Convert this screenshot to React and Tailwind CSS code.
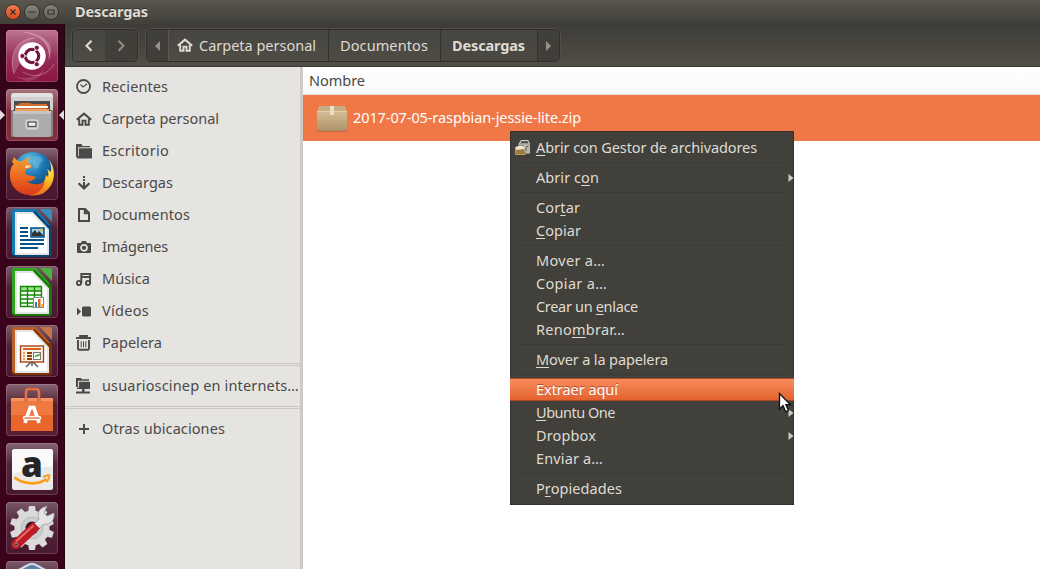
import React, { useLayoutEffect, useRef } from "react";

/* Label that tracks its letters so the run is `w` pixels wide. */
function Label({ w, children, className = "" }) {
  const ref = useRef(null);
  useLayoutEffect(() => {
    const el = ref.current;
    el.style.letterSpacing = "0px";
    const natural = el.getBoundingClientRect().width;
    el.style.letterSpacing = (w - natural) / el.textContent.length + "px";
  }, [w]);
  return (
    <span ref={ref} className={"inline-block shrink-0 whitespace-nowrap pb-0.5 " + className}>
      {children}
    </span>
  );
}

const homeShape = (
  <g fill="none" stroke="currentColor">
    <path d="M.8 8.7 8 2.6l7.2 6.1" strokeWidth="2.1" />
    <path d="M3.2 8v5.8h3.3V9.6h3v4.2h3.3V8" strokeWidth="1.9" />
  </g>
);

const sideIcons = {
  home: homeShape,
  recent: (
    <g fill="none" stroke="currentColor">
      <circle cx="7.5" cy="7.5" r="6.5" strokeWidth="1.8" />
      <path d="M4.5 5.5 7 8l4.2-3.2" strokeWidth="1.1" />
    </g>
  ),
  folder: (
    <g fill="currentColor">
      <path d="M0 1h5.5l1 2H14v1.2H2.2V14H0z" />
      <path d="M3 5.3h13V15.5H.8V13H3z" />
    </g>
  ),
  down: (
    <g>
      <path d="M7 1h2v2H7zM7 4h2v2H7zM7 7h2v5H7z" fill="currentColor" />
      <path d="M2.6 8.2 8 13.4l5.4-5.2" fill="none" stroke="currentColor" strokeWidth="2.2" />
    </g>
  ),
  doc: <path d="M3 2h6.2L13 5.8V14H3z M8.8 2v4.2H13" fill="none" stroke="currentColor" strokeWidth="2" />,
  camera: (
    <g>
      <path d="M2 4h3l1-2h4l1 2h3q1 0 1 1v8q0 1-1 1H2q-1 0-1-1V5q0-1 1-1z" fill="currentColor" />
      <circle cx="8" cy="8.8" r="3" fill="#4a4949" stroke="#e6e4e1" strokeWidth="1.7" />
    </g>
  ),
  music: (
    <g fill="none" stroke="currentColor" strokeWidth="1.9">
      <circle cx="3" cy="12" r="2.1" />
      <circle cx="12" cy="12" r="2.1" />
      <path d="M5.3 12V3h8.8v9M5.3 6h8.8" />
    </g>
  ),
  video: <path d="M6 4.500 7 3.500h7l1 1v8l-1 1H7l-1-1zM1 4.500l4 4-4 4z" fill="currentColor" />,
  trash: (
    <g fill="none" stroke="currentColor">
      <path d="M0 3h15M4 2.3V1h7v1.3" strokeWidth="1.8" />
      <path d="M2 5v8.5q0 1.3 1.3 1.3h8.4q1.3 0 1.3-1.3V5" strokeWidth="1.9" />
      <path d="M5.2 6.3v6M7.5 6.3v6M9.8 6.3v6" strokeWidth="1" />
    </g>
  ),
  remote: (
    <g fill="currentColor">
      <path d="M0 0h5l1 1.300h7v1.500H2V9H0z" />
      <path d="M3 3.800h11V11H1V9.500h2zM6 11h2.500v2.600H6zM0 13.600h14V15.500H0z" />
    </g>
  ),
  plus: <path d="M3 8h10M8 3v10" stroke="currentColor" strokeWidth="1.9" />,
};

const SideRow = ({ icon, w, children }) => (
  <li className="flex h-8 items-center gap-2.5 pl-[11px]">
    <svg className="shrink-0" width="16" height="16" viewBox="0 0 16 16">{sideIcons[icon]}</svg>
    <Label w={w}>{children}</Label>
  </li>
);

const SideSeparator = () => <div className="my-1 h-[3px] border-y border-[#cbc8c5]" />;

function OfficeDoc({ color, dark, children }) {
  return (
    <g>
      <path d="M8 2h22l16 18v27q0 3-3 3H9q-3 0-3-3V4q0-2 2-2z" fill={dark} />
      <path d="M7 2h23l14 16-2 0V48H9q-3 0-3-3V4z" fill={color} />
      <path d="M9 5h18l16 17v26H9z" fill="#e4e4e4" />
      <path d="M11 7h15l15 16v23H11z" fill="#fff" />
      <path d="m27 5 16 17v-3L29 4z" fill={dark} />
      <path d="M34 2h10q2 0 2 2v11z" fill={color} />
      <path d="M34 2h10q2 0 2 2v11z" fill="#fff" opacity=".14" />
      {children}
    </g>
  );
}

const GEAR = Array.from({ length: 10 }, (_, i) => i * 36);

const apps = [
  {
    id: "dash",
    tile: "bg-[linear-gradient(180deg,#bd7590,#96305a_50%,#8a1440)]",
    art: (
      <g>
        <path d="M18 2q27 5 25 27 5-12-3-19-8-7-22-8z" fill="#efc8d6" opacity=".4" />
        <path d="M8 44C3 26 9 9 29 8 15 14 10 22 14 33z" fill="#efc8d6" opacity=".25" />
        <path d="M4 45q20 8 34-5-6 12-18 11z" fill="#efc8d6" opacity=".2" />
        <g fill="none" stroke="#f0c6d5" strokeWidth=".8" opacity=".5">
          <path d="M8 44C3 26 9 9 29 8" />
          <path d="M18 2c18 3 27 14 25 27" />
          <path d="M48 34c-6 11-20 15-31 8" />
        </g>
        <circle cx="26" cy="26" r="13.7" fill="#fff" />
        <circle cx="26" cy="26" r="6.6" fill="none" stroke="#76143c" strokeWidth="3.4" />
        <g stroke="#fff" strokeWidth="1.2">
          <path d="M26 26 14 26M26 26l6-10.5M26 26l6 10.5" />
        </g>
        <circle cx="26" cy="26" r="5" fill="#fff" />
        <g fill="#76143c" stroke="#fff" strokeWidth=".8">
          <circle cx="16.4" cy="26" r="2.5" />
          <circle cx="30.8" cy="17.7" r="2.5" />
          <circle cx="30.8" cy="34.3" r="2.5" />
        </g>
      </g>
    ),
  },
  {
    id: "files",
    tile: "bg-[linear-gradient(180deg,#a77480,#7e2b3c_45%,#81303c)]",
    art: (
      <g>
        <path d="M7 4h38q2 0 2 3v14H5V7q0-3 2-3z" fill="#cfcfcf" />
        <path d="M7 4h38l2 4H5z" fill="#e2e2e2" />
        <path d="M8 12h36v12H8z" fill="#4d4a47" />
        <path d="M9 16h3l2-2h10l2 1h15v7H9z" fill="#d26f2f" />
        <path d="M10 17h32v2H10z" fill="#fff" />
        <path d="M9 20h34v3H9z" fill="#f0a060" />
        <path d="M7 22h38v24q0 2-2 2H9q-2 0-2-2z" fill="#acacac" />
        <path d="M7 22h38v3H7z" fill="#c5c5c5" />
        <path d="M5 21h2v27H6q-1 0-1-2zM45 21h2v25q0 2-2 2z" fill="#858585" />
        <rect x="20" y="31" width="12" height="9" rx="1.5" fill="#ccc" stroke="#e2e2e2" />
        <rect x="22" y="33" width="8" height="4.5" fill="#efefef" stroke="#555" strokeWidth="1.3" />
      </g>
    ),
  },
  {
    id: "browser",
    tile: "bg-[linear-gradient(180deg,#856574,#4e2337_38%,#4a1530)]",
    art: (
      <g>
        <defs>
          <radialGradient id="sky" cx=".4" cy=".2" r=".8"><stop offset="0" stopColor="#65c3e7" /><stop offset=".5" stopColor="#1b76b3" /><stop offset="1" stopColor="#123768" /></radialGradient>
          <linearGradient id="fox" x1="0" y1="0" x2="0" y2="1"><stop offset="0" stopColor="#f2a036" /><stop offset=".5" stopColor="#ed6b20" /><stop offset="1" stopColor="#d93a18" /></linearGradient>
          <linearGradient id="tail" x1="0" y1="0" x2="0" y2="1"><stop offset="0" stopColor="#fff4a0" /><stop offset=".5" stopColor="#fdc926" /><stop offset="1" stopColor="#ec6c1d" /></linearGradient>
        </defs>
        <circle cx="27" cy="24" r="20" fill="url(#sky)" />
        <path d="M28 8q8-1 9 5-5 2-4 7-7 2-6-5z" fill="#80bfda" opacity=".45" />
        <path d="M43 12c8 10 6 25-4 32-5 4-13 4-16 3 9-4 16-11 17-20l2 2q1-5-1-8l4 3q1-6-2-12z" fill="url(#tail)" />
        <path d="M6 14l2-5q3 5 8 4l8-4-2 5 4 4q-1 3-6 3-2 5 1 6l6 1 3 1q-3 5-9 4 4 4 12 3l6-2q-2 8-10 12c-13 4-25-6-25-18 0-6 1-10 4-12z" fill="url(#fox)" />
        <path d="M20 17l5 1-3 2h-3z" fill="#f7d9ae" />
      </g>
    ),
  },
  {
    id: "writer",
    tile: "bg-[linear-gradient(180deg,#7b5b6b,#4e2036_42%,#4b1731)]",
    art: (
      <OfficeDoc color="#147ab3" dark="#064371">
        <path d="M14 21h8M14 25h8M14 29h8M14 33h24M14 37h24M14 41h18" stroke="#06548a" strokeWidth="2" />
        <rect x="25" y="21" width="13" height="9" fill="#9ed1ed" stroke="#06548a" strokeWidth="1.6" />
        <path d="M26 29v-3l3-3 2 3 2-2 4 4v1z" fill="#323232" />
        <circle cx="35.5" cy="23" r="1.4" fill="#e6be2b" />
      </OfficeDoc>
    ),
  },
  {
    id: "calc",
    tile: "bg-[linear-gradient(180deg,#7b5b6b,#4e2036_42%,#4b1731)]",
    art: (
      <OfficeDoc color="#31a71f" dark="#167806">
        <rect x="14" y="21" width="22" height="20" fill="#fff" />
        <path d="M14 21h22v4H14z" fill="#9ce18b" />
        <path d="M14.5 20.5h21v20h-21zM14 25h22M14 29h22M14 33h22M14 37h22M21.5 21v20M28.5 21v20" fill="none" stroke="#168806" strokeWidth="1.4" />
        <rect x="27.5" y="31.5" width="10" height="10" fill="#fff" stroke="#888" />
        <path d="M29 36h2v5h-2z" fill="#1785be" /><path d="M32 33h2.5v8H32z" fill="#e66520" /><path d="M35 38h2v3h-2z" fill="#eebd24" />
      </OfficeDoc>
    ),
  },
  {
    id: "impress",
    tile: "bg-[linear-gradient(180deg,#7b5b6b,#4e2036_42%,#4b1731)]",
    art: (
      <OfficeDoc color="#bd612b" dark="#813303">
        <path d="m25 37-5 5M27 37l5 5M26 37v4" stroke="#666" strokeWidth="1.6" />
        <rect x="14.5" y="21" width="23" height="16" fill="#fff3e9" stroke="#a34311" strokeWidth="1.4" />
        <path d="M17 24h18" stroke="#d9641d" strokeWidth="2" />
        <path d="M17 28h2M17 31h2M17 34h2" stroke="#ed9c6c" strokeWidth="2" />
        <path d="M21 28h5M21 31h5M21 34h5" stroke="#963d08" strokeWidth="2" />
        <rect x="27.5" y="27.5" width="7" height="7" fill="#fff" stroke="#777" />
        <path d="m29 32 2-2 1 1 2-2" fill="none" stroke="#34a324" strokeWidth="1.2" />
      </OfficeDoc>
    ),
  },
  {
    id: "software",
    tile: "bg-[linear-gradient(180deg,#856574,#54202f_40%,#571f32)]",
    art: (
      <g>
        <path d="M5 14h42v33H5z" fill="#e9652c" />
        <path d="M5 14h42v17H5z" fill="#ef7a40" />
        <path d="M5 14h42v3H5z" fill="#f49365" />
        <path d="M20 18V8q0-3 3-3h7q3 0 3 3v10" fill="none" stroke="#c9562f" strokeWidth="3" />
        <path d="M20 18V8q0-3 3-3h7q3 0 3 3v10" fill="none" stroke="#ea8a60" strokeWidth="1.2" />
        <path d="M19 39 24.2 23.5h3.6L33 39" fill="none" stroke="#fff" strokeWidth="3.6" />
        <rect x="17.5" y="32.5" width="17" height="3" rx="1.5" fill="#ee7740" stroke="#fff" strokeWidth="1.5" />
      </g>
    ),
  },
  {
    id: "amazon",
    tile: "bg-[linear-gradient(180deg,#856574,#52253b_40%,#481a31)]",
    art: (
      <g>
        <rect x="6" y="6" width="41" height="41" rx="2.5" fill="#e9e9e9" />
        <path d="M6 9q0-3 3-3h35q3 0 3 3v14q-20 2-41 8z" fill="#fafafa" />
        <text x="26" y="33.5" textAnchor="middle" fontFamily="Open Sans, sans-serif" fontWeight="800" fontSize="35" fill="#252525">a</text>
        <path d="M8.5 34.5c10 7.5 24 7.5 32 1.5" fill="none" stroke="#fc9b10" strokeWidth="2.6" />
        <path d="M37 34q7-3 6.5-1-.5 4-3 6" fill="none" stroke="#fc9b10" strokeWidth="1.8" />
      </g>
    ),
  },
  {
    id: "settings",
    tile: "bg-[linear-gradient(180deg,#79596a,#52253b_40%,#481a31)]",
    art: (
      <g>
        <g fill="#dadada">
          {GEAR.map((a) => <path key={a} d="M22 11 23 4h6l1 7z" transform={`rotate(${a} 26 26)`} />)}
          <circle cx="26" cy="26" r="17.5" />
        </g>
        <circle cx="26" cy="26" r="11" fill="#cdcdcd" stroke="#bababa" />
        <circle cx="26" cy="26" r="6.5" fill="#38142a" />
        <path d="M27 23 33 17q-3-7 3-11l5-2-3 7 3 3 7-3q1 8-6 11l-5 .5L32 28z" fill="#e4e4e4" stroke="#999" strokeWidth=".8" />
        <path d="M6.5 39 27 20l7 6.5L14 45.5q-5 3-8.5-.5-1.5-3 1-6z" fill="#bd1c24" />
        <path d="m10 39.5 17.5-16" stroke="#e56b6b" strokeWidth="2" />
        <circle cx="10" cy="42.5" r="1.7" fill="#481a31" stroke="#ddd" strokeWidth=".6" />
      </g>
    ),
  },
  {
    id: "box",
    tile: "bg-[linear-gradient(180deg,#79596a,#52253b_40%,#481a31)]",
    art: <path d="M9 11 22 4q4-2 8 0l13 7v30H9z" fill="#5d80a8" stroke="#d3deea" strokeWidth="2" />,
  },
];

const menu = [
  [{ w: 221, archive: true, t: <><u>A</u>brir con Gestor de archivadores</> }],
  [{ w: 63, sub: true, t: <>Abrir c<u>o</u>n</> }],
  [{ w: 44, t: <>Cor<u>t</u>ar</> }, { w: 45, t: <><u>C</u>opiar</> }],
  [
    { w: 69, t: "Mover a…" },
    { w: 71, t: "Copiar a…" },
    { w: 102, t: <>Crear un <u>e</u>nlace</> },
    { w: 89, t: <>Reno<u>m</u>brar…</> },
  ],
  [{ w: 132, t: <><u>M</u>over a la papelera</> }],
  [
    { w: 82, active: true, t: "Extraer aquí" },
    { w: 79, sub: true, t: <><u>U</u>buntu One</> },
    { w: 60, sub: true, t: "Dropbox" },
    { w: 67, t: "Enviar a…" },
  ],
  [{ w: 86, t: <>P<u>r</u>opiedades</> }],
];

const ArchiveIcon = () => (
  <svg className="absolute left-[5px] top-[3px]" width="16" height="17" viewBox="0 0 16 17">
    <path d="m3 6 2-4h8l2 3v10H3z" fill="#888780" />
    <path d="M5 4 6 1.5h7L14.5 5H4z" fill="#55544d" stroke="#d8d8d2" />
    <path d="M9 6h6v8H9z" fill="#b9b9b2" />
    <path d="M13.5 7q-4 1-2 5" fill="none" stroke="#666" strokeWidth="1.2" />
    <path d="M0 8.5q4-3 9-1l1 7H1z" fill="#efe5c9" />
    <path d="m1 11 8-1 2 5.5H1z" fill="#9b7a46" />
    <path d="M.5 9v6.5h10" fill="none" stroke="#bd9a48" />
  </svg>
);

const MenuItem = ({ item }) => (
  <li
    className={
      "relative -mx-px flex h-[23px] items-center pl-[26px] " +
      (item.active
        ? "border-y border-[#b04a25] bg-linear-to-b from-[#f98b5c] to-[#e3622f] text-white [text-shadow:0_-1px_0_#b0502c]"
        : "text-[#dfdbd2]")
    }
  >
    {item.archive && <ArchiveIcon />}
    <Label w={item.w}>{item.t}</Label>
    {item.sub && (
      <svg className="ml-auto" width="6" height="8" viewBox="0 0 6 8">
        <path d="M.5 0 5.5 4 .5 8z" fill="#cdc9c0" />
      </svg>
    )}
  </li>
);

const ContextMenu = () => (
  <div className="absolute left-[510px] top-[131px] h-[374px] w-[284px] border border-[#34332f] bg-[#42403b] py-1 [&_u]:underline-offset-2 [&_u]:decoration-1">
    {menu.map((group, i) => (
      <React.Fragment key={i}>
        {i > 0 && <div className="mx-1 h-[7px] pt-[3px]"><div className="h-px bg-[#3c3a36]" /></div>}
        <ul>{group.map((item, j) => <MenuItem key={j} item={item} />)}</ul>
      </React.Fragment>
    ))}
  </div>
);

const WindowButton = ({ close, children }) => (
  <span
    className={
      "flex size-4 items-center justify-center rounded-full border border-[#35342f] " +
      (close ? "bg-linear-to-b from-[#f67b52] to-[#dc4717]" : "bg-linear-to-b from-[#858177] to-[#67645c]")
    }
  >
    <svg width="14" height="14" viewBox="0 0 14 14" fill="none" stroke="#36342f" strokeWidth="1.2">{children}</svg>
  </span>
);

export default function App() {
  return (
    <div className="relative flex h-[569px] w-[1040px] flex-col overflow-hidden bg-white font-['Noto_Sans','Open_Sans',sans-serif] text-[14.5px] leading-5 text-[#4a4949]">
      <header className="flex h-6 shrink-0 items-center bg-linear-to-b from-[#59574e] to-[#403f3a] pb-px pl-[5px] text-[#dfdbd2]">
        <div className="flex gap-[3px]">
          <WindowButton close><path d="m4.5 4.5 5 5m0-5-5 5" strokeWidth="1.4" /></WindowButton>
          <WindowButton><path d="M3.5 7h7" /></WindowButton>
          <WindowButton><path d="M4 5h6v4H4z" /></WindowButton>
        </div>
        <Label w={73} className="ml-[16px] font-bold [text-shadow:0_-1px_0_#33322e]">Descargas</Label>
      </header>

      <div className="flex min-h-0 flex-1">
        <nav className="relative flex w-[65px] shrink-0 flex-col gap-[7px] overflow-hidden border-r border-[#220512] bg-linear-to-b from-[#32051a] via-[#3a031b] to-[#3a031b]">
          {apps.map((app) => (
            <div key={app.id} className={"ml-[6px] size-[52px] shrink-0 rounded-[4px] shadow-[inset_0_0_0_1px_rgba(255,220,230,0.18)] first:mt-[6px] " + app.tile}>
              <svg className="overflow-visible" width="52" height="52" viewBox="0 0 52 52">{app.art}</svg>
            </div>
          ))}
          <svg className="absolute left-0 top-[86px]" width="65" height="10" viewBox="0 0 65 10">
            <path d="M0 0v10l5-5zM64 0v10l-5-5z" fill="#e0dcdd" />
          </svg>
        </nav>

        <div className="flex min-w-0 flex-1 flex-col">
          <div className="flex h-[43px] shrink-0 items-center gap-2 border-b border-[#383731] bg-linear-to-b from-[#3d3c37] to-[#504e46] pl-[7px] pt-px text-[#dfdbd2]">
            <div className="flex h-[33px] w-[66px] overflow-hidden rounded-[5px] border border-[#302f2b] shadow-[0_0_0_1px_#504e47]">
              <span className="flex w-[32px] items-center justify-center bg-linear-to-b from-[#464540] to-[#4e4c45]">
                <svg width="10" height="14" viewBox="0 0 10 14" fill="none" stroke="#dfdbd2" strokeWidth="2.1"><path d="m7.5 1.8-5 5 5 5" /></svg>
              </span>
              <span className="flex flex-1 items-center justify-center bg-[#403f3a]">
                <svg width="10" height="14" viewBox="0 0 10 14" fill="none" stroke="#8d8a82" strokeWidth="2.1"><path d="m2.5 1.8 5 5-5 5" /></svg>
              </span>
            </div>
            <div className="flex h-[33px] w-[414px] overflow-hidden rounded-[5px] border border-[#302f2b] bg-linear-to-b from-[#464540] to-[#4e4c45] shadow-[0_0_0_1px_#504e47]">
              <span className="flex w-[22px] items-center justify-center border-r border-[#5c5a52] bg-[#403f3a]">
                <svg width="5" height="10" viewBox="0 0 5 10"><path d="M5 0v10L0 5z" fill="#95928a" /></svg>
              </span>
              <span className="flex w-[160px] items-center gap-[6px] border-r border-[#33322e] pl-[8px]">
                <svg className="mb-0.5" width="16" height="16" viewBox="0 0 16 16">{homeShape}</svg>
                <Label w={117}>Carpeta personal</Label>
              </span>
              <span className="flex w-[112px] items-center border-r border-[#33322e] pl-[11px]"><Label w={88}>Documentos</Label></span>
              <span className="flex w-[97px] items-center border-r border-[#33322e] bg-[#484640]/60 pl-[11px] font-bold"><Label w={73}>Descargas</Label></span>
              <span className="flex flex-1 items-center justify-center bg-[#403f3a]">
                <svg width="5" height="10" viewBox="0 0 5 10"><path d="M0 0v10l5-5z" fill="#95928a" /></svg>
              </span>
            </div>
          </div>

          <div className="flex min-h-0 flex-1">
            <aside className="w-[238px] shrink-0 border-r-[3px] border-[#cfcac7] bg-[#e6e4e1] pt-1">
              <ul>
                <SideRow icon="recent" w={66}>Recientes</SideRow>
                <SideRow icon="home" w={117}>Carpeta personal</SideRow>
                <SideRow icon="folder" w={67}>Escritorio</SideRow>
                <SideRow icon="down" w={71}>Descargas</SideRow>
                <SideRow icon="doc" w={88}>Documentos</SideRow>
                <SideRow icon="camera" w={66}>Imágenes</SideRow>
                <SideRow icon="music" w={48}>Música</SideRow>
                <SideRow icon="video" w={47}>Vídeos</SideRow>
                <SideRow icon="trash" w={60}>Papelera</SideRow>
              </ul>
              <SideSeparator />
              <ul><SideRow icon="remote" w={197}>usuarioscinep en internets…</SideRow></ul>
              <SideSeparator />
              <ul><SideRow icon="plus" w={123}>Otras ubicaciones</SideRow></ul>
            </aside>

            <main className="flex min-w-0 flex-1 flex-col bg-white">
              <div className="flex h-7 items-center border-b border-[#e0dedc] bg-linear-to-b from-white to-[#f9f9f9] pl-[6px]">
                <Label w={56}>Nombre</Label>
              </div>
              <div className="flex h-[46px] items-center gap-[5px] bg-[#f07746] pl-[13px] text-white">
                <svg className="mt-0.5" width="32" height="32" viewBox="0 0 32 32">
                  <defs>
                    <linearGradient id="carton" x1="0" y1="0" x2="0" y2="1"><stop offset="0" stopColor="#d4bc94" /><stop offset="1" stopColor="#ae9166" /></linearGradient>
                  </defs>
                  <path d="M1 27h30v2H1z" fill="#9f5033" opacity=".45" />
                  <path d="M3 3h26l2 6H1z" fill="#c8ad83" />
                  <path d="M1 9h30v17q0 2-2 2H3q-2 0-2-2z" fill="url(#carton)" />
                  <path d="M1 8.5h30" stroke="#e2cfac" />
                  <path d="M14 3h4v9h-4z" fill="#e9dec8" />
                </svg>
                <Label w={228}>2017-07-05-raspbian-jessie-lite.zip</Label>
              </div>
            </main>
          </div>
        </div>
      </div>

      <ContextMenu />
      <svg className="absolute left-[778px] top-[392px]" width="14" height="22" viewBox="0 0 14 22">
        <path d="M1.5 1.5v15.5l3.5-3.3 2.7 6 2.8-1.2-2.6-5.8h4.6z" fill="#fff" stroke="#111" strokeWidth="1.3" />
      </svg>
    </div>
  );
}
